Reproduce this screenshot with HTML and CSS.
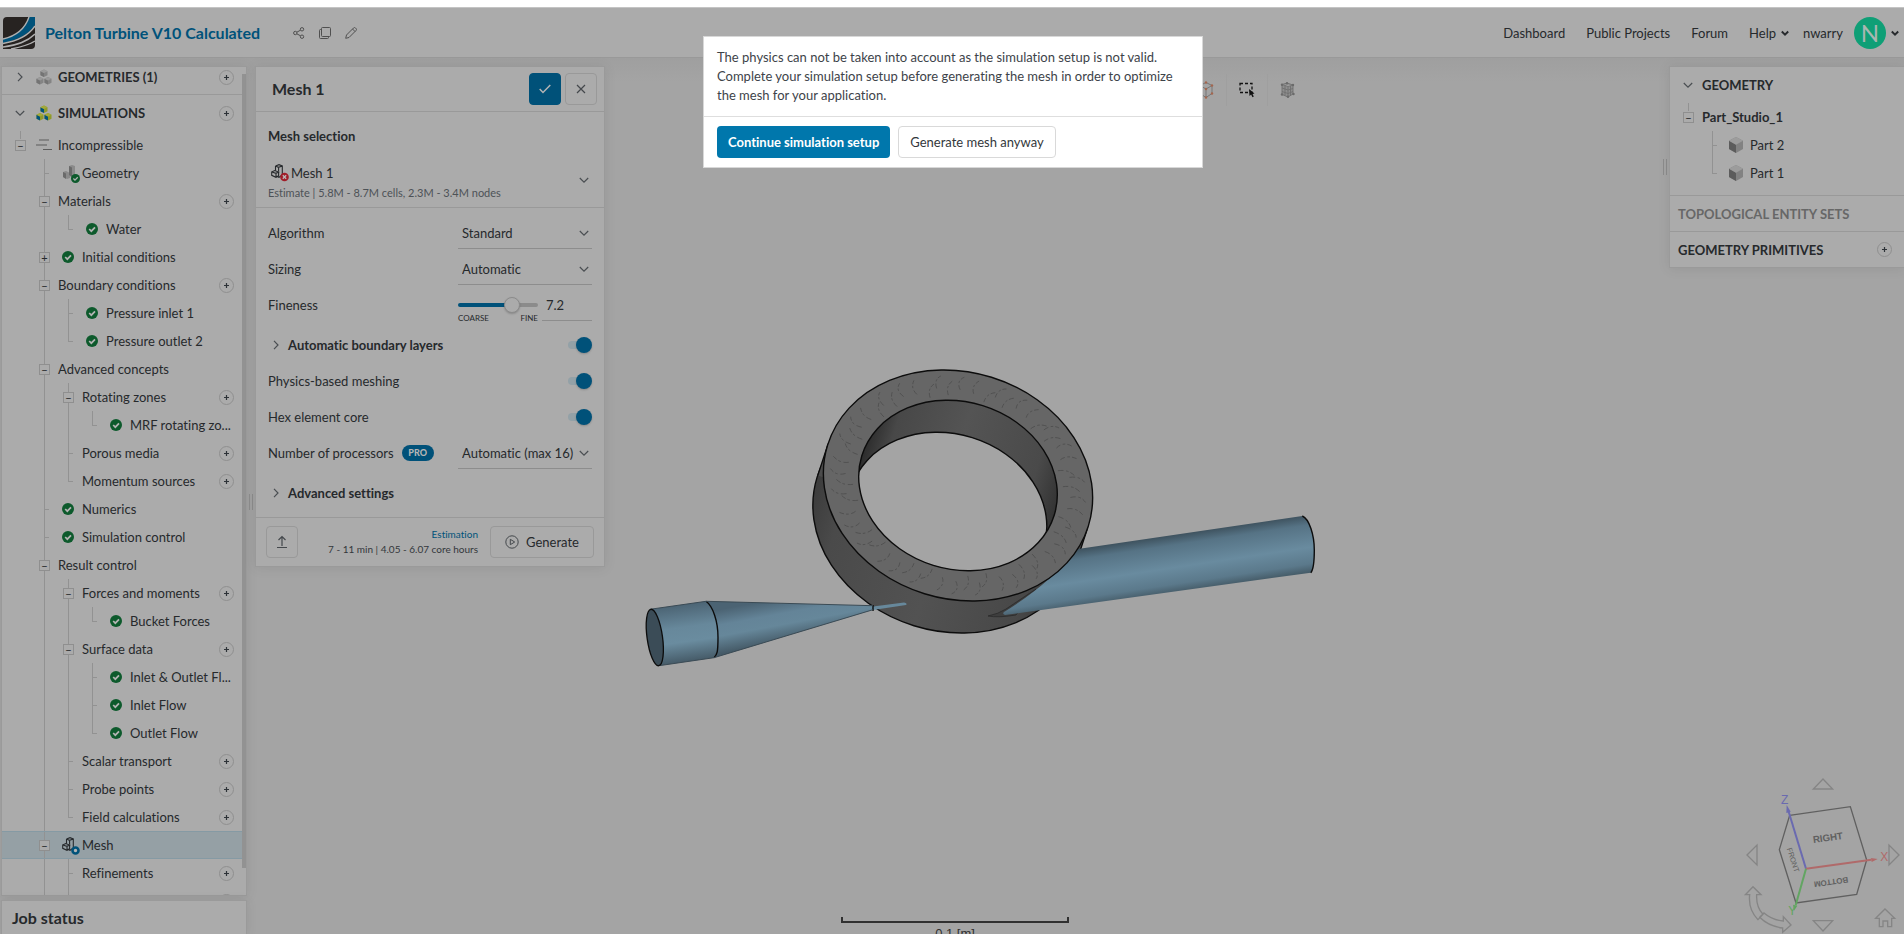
FILE: index.html
```html
<!DOCTYPE html>
<html lang="en">
<head>
<meta charset="utf-8">
<title>Pelton Turbine V10 Calculated</title>
<link rel="stylesheet" href="styles.css">
</head>
<body>
<svg class="defs" aria-hidden="true">
  <symbol id="plus" viewBox="0 0 15 15"><circle cx="7.5" cy="7.5" r="7" fill="none" stroke="#8f8f8f"/><path d="M5 7.5h5M7.5 5v5" stroke="#2e3338" stroke-width="1.2"/></symbol>
  <symbol id="down" viewBox="0 0 10 10"><path d="M.8 3l4.200 4.200L9.200 3" fill="none" stroke="#4a4e52" stroke-width="1.200"/></symbol>
  <symbol id="right" viewBox="0 0 10 10"><path d="M3 .8l4 4.200-4 4.200" fill="none" stroke="#4a4e52" stroke-width="1.200"/></symbol>
  <symbol id="caret" viewBox="0 0 10 10"><path d="M1.800 3.500L5 6.700l3.200-3.200" fill="none" stroke="#26292c" stroke-width="1.900"/></symbol>
  <symbol id="ok" viewBox="0 0 12 12"><circle cx="6" cy="6" r="6" fill="#0d5a2c"/><path d="M3.200 6l2.100 2.200 3.700-3.900" fill="none" stroke="#b4b4b4" stroke-width="1.700"/></symbol>
  <symbol id="cubes" viewBox="0 0 16 16">
    <path class="c1" d="M8 .5l3.500 1.700v4L8 8 4.500 6.200v-4zM4 8l3.500 1.700v4L4 15.500.5 13.700v-4zM12 8l3.500 1.700v4L12 15.500l-3.500-1.800v-4z"/>
    <path class="c2" d="M4.500 2.200L8 4v4L4.500 6.200zM.5 9.700L4 11.500v4L.5 13.700zM8.500 9.700l3.500 1.800v4l-3.500-1.800z"/>
    <path class="c3" d="M8 .5l3.500 1.700L8 4 4.500 2.200zM4 8l3.500 1.700L4 11.500.5 9.700zM12 8l3.500 1.700-3.500 1.800-3.500-1.800z"/>
  </symbol>
  <symbol id="meshcube" viewBox="0 0 12 14">
    <path d="M4.500 2L8 .7l3.300 1.200V11L8 13.300 5 12M4.500 2v4.200M4.500 2l3 1.300 3.800-1.400M7.600 3.300v4M.7 8l3-1.500L7.600 8 5 9.300zM.7 8v3.300L5 13.300l2.600-1.600V8M5 9.300v4" fill="none" stroke="#26292c" stroke-width="1.100"/>
  </symbol>
  <symbol id="part" viewBox="0 0 14 16">
    <path d="M7 0l7 3.700v8.300l-7 4-7-4V3.700z" fill="#828282"/><path d="M0 3.700l7 4V16l-7-4z" fill="#5c5c5c"/><path d="M7 0l7 3.700-7 4-7-4z" fill="#9c9c9c"/>
  </symbol>
</svg>

<header class="topbar">
  <svg class="logo" viewBox="0 0 32 32" role="img" aria-label="Home">
    <path d="M0 4a4 4 0 0 1 4-4h28v28a4 4 0 0 1-4 4H0z" fill="#272321"/>
    <path d="M26 0h6v8C26 17 15 23 0 26v-4C13 19 22 12 26 0z" fill="#00527a"/>
    <path d="M26 0C22 12 13 19 0 22M32 9C26 18 15 24 0 26.500M32 17C24 25 14 28 0 30M32 24C26 28 18 30 8 32" fill="none" stroke="#b0b0b0" stroke-width="1.400"/>
  </svg>
  <h1 class="project">Pelton Turbine V10 Calculated</h1>
  <div class="tools">
    <button class="bare" aria-label="Share"><svg width="12" height="12" viewBox="0 0 12 12" fill="none" stroke="#505050"><circle cx="9" cy="2.300" r="1.700"/><circle cx="2.300" cy="6" r="1.700"/><circle cx="9" cy="9.700" r="1.700"/><path d="M3.800 5.200l3.700-2M3.800 6.800l3.700 2"/></svg></button>
    <button class="bare" aria-label="Duplicate"><svg width="12" height="12" viewBox="0 0 12 12" fill="none" stroke="#505050"><rect x="2.500" y=".5" width="9" height="9" rx="1"/><path d="M2.500 2.500h-1a1 1 0 0 0-1 1v7a1 1 0 0 0 1 1h7a1 1 0 0 0 1-1v-1"/></svg></button>
    <button class="bare" aria-label="Rename"><svg width="12" height="12" viewBox="0 0 12 12" fill="none" stroke="#505050"><path d="M.7 11.300l.8-3.300L8.500 1a1.400 1.400 0 0 1 2 0l.5.500a1.400 1.400 0 0 1 0 2L4 10.500zM7.500 2l2.500 2.500"/></svg></button>
  </div>
  <nav class="nav">
    <a href="#">Dashboard</a>
    <a href="#">Public Projects</a>
    <a href="#">Forum</a>
    <a href="#" class="menu">Help <svg class="s10"><use href="#caret"/></svg></a>
  </nav>
  <button class="user"><span>nwarry</span><span class="avatar">N</span><svg class="s10"><use href="#caret"/></svg></button>
</header>

<main class="work">
  <div class="stage">
    <svg class="model" width="736" height="348" viewBox="584 322 736 348" role="img" aria-label="Turbine geometry">
      <defs>
        <linearGradient id="side" x1="0" x2="1"><stop offset="0" stop-color="#3c3c3c"/><stop offset=".12" stop-color="#4a4a4a"/><stop offset=".5" stop-color="#525252"/><stop offset=".85" stop-color="#484848"/><stop offset="1" stop-color="#333"/></linearGradient>
        <linearGradient id="hole" x1="0" x2="1"><stop offset="0" stop-color="#2c2c2c"/><stop offset=".12" stop-color="#484848"/><stop offset=".45" stop-color="#545454"/><stop offset=".85" stop-color="#4a4a4a"/><stop offset="1" stop-color="#333"/></linearGradient>
        <linearGradient id="pipe" gradientUnits="userSpaceOnUse" x1="1180" y1="533" x2="1189" y2="593"><stop offset="0" stop-color="#3c4f5b"/><stop offset=".18" stop-color="#567385"/><stop offset=".55" stop-color="#698b9f"/><stop offset=".82" stop-color="#5b798b"/><stop offset="1" stop-color="#40545f"/></linearGradient>
        <linearGradient id="inlet" gradientUnits="userSpaceOnUse" x1="680" y1="604" x2="688" y2="662"><stop offset="0" stop-color="#4b6373"/><stop offset=".4" stop-color="#67889b"/><stop offset=".65" stop-color="#6a8c9f"/><stop offset="1" stop-color="#455a67"/></linearGradient>
        <linearGradient id="cone" gradientUnits="userSpaceOnUse" x1="760" y1="602" x2="768" y2="645"><stop offset="0" stop-color="#4b6373"/><stop offset=".35" stop-color="#648498"/><stop offset=".6" stop-color="#66879a"/><stop offset="1" stop-color="#455a67"/></linearGradient>
        <clipPath id="bore"><ellipse cx="958" cy="485.500" rx="100.700" ry="83.600" transform="rotate(17.200 958 485.500)"/></clipPath>
        <g id="marks" fill="none" stroke="#4a4a4a" stroke-width=".55" stroke-dasharray="4 2 2 1.500">
          <path d="M77 0q8 0 11 6"/><path d="M84 7q8 0 10 6"/><path d="M77 14q9 0 12 8"/><path d="M80 24q8-1 10 6"/><path d="M75 33q7 0 10 7"/>
        </g>
      </defs>
      <g stroke="#0c0c0c" stroke-width="1.400">
        <ellipse cx="947.500" cy="517.500" rx="136.500" ry="113.300" transform="rotate(17.200 947.500 517.500)" fill="url(#side)"/>
        <path d="M828.200 443.600L817.700 475.600 1077.300 559.400 1087.800 527.400z" fill="#4c4c4c" stroke="none"/>
        <path d="M828.200 443.600L817.700 475.600M1077.300 559.400L1087.800 527.400" fill="none"/>
      </g>
      <path d="M988 616q10-2 18-7l30-20-20 26q-18 3-28 1z" fill="#3e3e3e" stroke="#222" stroke-width=".6"/>
      <path d="M1078 549L1302.300 516c8 4 12 19 12 34s-1 20-3.500 22.700L1005 615q-3-1-1-3 26-16 46-34l15-30z" fill="url(#pipe)"/>
      <path d="M1302.300 516c7 3 12 19 12 34s-1 20-3.500 22.700" fill="none" stroke="#0c0c0c" stroke-width="1.400"/>
      <ellipse cx="958" cy="485.500" rx="136.500" ry="113.300" transform="rotate(17.200 958 485.500)" fill="#666" stroke="#0c0c0c" stroke-width="1.400"/>
      <g transform="translate(958 485.500) rotate(17.200) scale(1.365 1.133)">
        <use href="#marks"/><use href="#marks" transform="rotate(30)"/><use href="#marks" transform="rotate(60)"/><use href="#marks" transform="rotate(90)"/><use href="#marks" transform="rotate(120)"/><use href="#marks" transform="rotate(150)"/><use href="#marks" transform="rotate(180)"/><use href="#marks" transform="rotate(210)"/><use href="#marks" transform="rotate(240)"/><use href="#marks" transform="rotate(270)"/><use href="#marks" transform="rotate(300)"/><use href="#marks" transform="rotate(330)"/>
      </g>
      <ellipse cx="958" cy="485.500" rx="100.700" ry="83.600" transform="rotate(17.200 958 485.500)" fill="url(#hole)"/>
      <g clip-path="url(#bore)"><ellipse cx="947.500" cy="517.500" rx="100.700" ry="83.600" transform="rotate(17.200 947.500 517.500)" fill="#a4a4a4" stroke="#0c0c0c" stroke-width="1.400"/></g>
      <ellipse cx="958" cy="485.500" rx="100.700" ry="83.600" transform="rotate(17.200 958 485.500)" fill="none" stroke="#0c0c0c" stroke-width="1.400"/>
      <path d="M873 606.500l31-4q4 1 2 2.500l-33 5z" fill="#67889b"/>
      <path d="M706 601.300L873.300 605.700v4L714 657.700z" fill="url(#cone)"/>
      <path d="M650 609.300L706 601.300c7 5 12 20 12 36s-1 17-4 20.400L659 665.700z" fill="url(#inlet)"/>
      <path d="M706 601.300c7 5 12 20 12 36s-1 17-4 20.400M873 605v6" fill="none" stroke="#0c0c0c" stroke-width="1.400"/>
      <path d="M650 609.300l56-8 167 4.400M659 665.700l55-8 159-48" fill="none" stroke="#3b4b55"/>
      <ellipse cx="654.800" cy="637.500" rx="7.700" ry="28.500" transform="rotate(-8 654.800 637.500)" fill="#3b4c57" stroke="#0c0c0c" stroke-width="1.300"/>
    </svg>
    <div class="scale"><div class="ruler"></div><span>0.1 [m]</span></div>
    <div class="viewbar">
      <button class="bare" aria-label="Solid view"><svg width="16" height="18" viewBox="0 0 16 18" fill="none"><path d="M8 1.500l6 3v8l-6 4-6-4v-8zM2 4.500L8 8l6-3.500M8 8v8" stroke="#777"/><g fill="#a3664f"><circle cx="8" cy="1.500" r="1.200"/><circle cx="14" cy="4.500" r="1.200"/><circle cx="14" cy="12.500" r="1.200"/><circle cx="8" cy="16.500" r="1.200"/><circle cx="8" cy="8" r="1.200"/></g></svg></button>
      <span class="bar"></span>
      <button class="bare" aria-label="Box select"><svg width="16" height="16" viewBox="0 0 16 16"><rect x="1" y="1.500" width="12" height="9" fill="none" stroke="#111" stroke-width="1.300" stroke-dasharray="3 2"/><path d="M10 7l5.500 4.500-2 .4 1.300 2.600-1.300.8-1.400-2.700-1.600 1.400z" fill="#111"/></svg></button>
      <span class="bar"></span>
      <button class="bare" aria-label="Mesh view"><svg width="16" height="16" viewBox="0 0 16 16"><path d="M2 2.500L8 4.500V15L2 12.500zM5 3.500v10M2 6l6 2M2 9.500l6 2M8 4.500L13 3v9l-5 3M2 2.500L7 1l6 2M10.500 4v9.500M8 8l5-1.500M8 11.500l5-2" fill="#8e8e8e" stroke="#707070" stroke-width=".9"/><g fill="#6a6a6a"><circle cx="7" cy="1.300" r="1.200"/><circle cx="2" cy="2.700" r="1.200"/><circle cx="13" cy="3" r="1.200"/><circle cx="2" cy="12.500" r="1.200"/><circle cx="13.500" cy="12" r="1.200"/><circle cx="8" cy="14.700" r="1.200"/></g></svg></button>
    </div>
    <svg class="viewcube" width="184" height="174" viewBox="0 0 552 522" fill="none" stroke-width="3" role="img" aria-label="Orientation cube">
      <g stroke="#858585" stroke-width="4"><path d="M309 57l29 30h-58zM309 513l29-31h-58zM81 285l30-30v60zM537 285l-30-30v60z"/>
      <path d="M76 404l23-24 24 24h-13q-2 38 19 59l-15 16q-30-30-25-75zM119 472l13-13q24 21 58 24v-13l23 25-25 22v-13q-42-5-69-32z"/>
      <path d="M467 475l28-28 29 28h-9v25h-12v-17h-14v17h-11v-25z"/></g>
      <path d="M209 166l182-26 49 160-30 103-182 26-50-160z" stroke="#606060" stroke-width="4"/>
      <g stroke-width="6"><path d="M258 326L206 155" stroke="#6a6ab0"/><path d="M258 326l196-27" stroke="#b06a6a"/><path d="M258 326l-31 110" stroke="#62a562"/></g>
      <path d="M200 135l12 20-13 4z" fill="#6a6ab0"/><path d="M473 297l-18 9-2-12z" fill="#b06a6a"/><path d="M222 452l-3-18 13 3z" fill="#62a562"/>
      <g class="axis" text-anchor="middle"><text x="194" y="132" fill="#6a6ab0">Z</text><text x="493" y="303" fill="#b06a6a">X</text><text x="217" y="466" fill="#62a562">Y</text></g>
      <g class="face" fill="#606060" text-anchor="middle"><text transform="translate(325 243) rotate(-8)">RIGHT</text><text class="sm" transform="translate(332 358) rotate(172)">BOTTOM</text><text class="xs" transform="translate(212 302) rotate(72)">FRONT</text></g>
    </svg>
  </div>

  <aside class="left">
    <section class="panel tree" aria-label="Project tree">
      <div class="row head first"><span class="c"><svg class="s10"><use href="#right"/></svg></span><span class="c"><svg class="s16 grey"><use href="#cubes"/></svg></span><b>GEOMETRIES (1)</b><button class="add" aria-label="Add"><svg><use href="#plus"/></svg></button></div>
      <div class="row head"><span class="c"><svg class="s10"><use href="#down"/></svg></span><span class="c"><svg class="s16 color"><use href="#cubes"/></svg></span><b>SIMULATIONS</b><button class="add" aria-label="Add"><svg><use href="#plus"/></svg></button></div>
      <div class="row"><span class="c up"><button class="ex">−</button></span><span class="c"><svg class="s16" viewBox="0 0 16 16"><path d="M3 3h10M0 8h11M7 12.500h9" stroke="#5c5c5c" stroke-width="1.200"/></svg></span><span class="t">Incompressible</span></div>
      <div class="row"><span class="c"></span><span class="c v k"></span><span class="c badge"><svg class="s18" viewBox="0 0 18 18"><path d="M7 1l3-1 3 1v9l-3 2-3-1zM1 7l3-1 4 2v5l-3 1-4-2z" fill="#8a8a8a"/><path d="M7 1l3 1.500V12l-3-2zM1 7l3 1.500V14l-3-2z" fill="#6a6a6a"/><use href="#ok" x="9" y="9" width="9" height="9"/></svg></span><span class="t">Geometry</span></div>
      <div class="row"><span class="c"></span><span class="c v"><button class="ex">−</button></span><span class="t">Materials</span><button class="add" aria-label="Add"><svg><use href="#plus"/></svg></button></div>
      <div class="row"><span class="c"></span><span class="c v"></span><span class="c h k"></span><span class="c"><svg class="s12"><use href="#ok"/></svg></span><span class="t">Water</span></div>
      <div class="row"><span class="c"></span><span class="c v"><button class="ex">+</button></span><span class="c"><svg class="s12"><use href="#ok"/></svg></span><span class="t">Initial conditions</span></div>
      <div class="row"><span class="c"></span><span class="c v"><button class="ex">−</button></span><span class="t">Boundary conditions</span><button class="add" aria-label="Add"><svg><use href="#plus"/></svg></button></div>
      <div class="row"><span class="c"></span><span class="c v"></span><span class="c v k"></span><span class="c"><svg class="s12"><use href="#ok"/></svg></span><span class="t">Pressure inlet 1</span></div>
      <div class="row"><span class="c"></span><span class="c v"></span><span class="c h k"></span><span class="c"><svg class="s12"><use href="#ok"/></svg></span><span class="t">Pressure outlet 2</span></div>
      <div class="row"><span class="c"></span><span class="c v"><button class="ex">−</button></span><span class="t">Advanced concepts</span></div>
      <div class="row"><span class="c"></span><span class="c v"></span><span class="c v"><button class="ex">−</button></span><span class="t">Rotating zones</span><button class="add" aria-label="Add"><svg><use href="#plus"/></svg></button></div>
      <div class="row"><span class="c"></span><span class="c v"></span><span class="c v"></span><span class="c h k"></span><span class="c"><svg class="s12"><use href="#ok"/></svg></span><span class="t">MRF rotating zo...</span></div>
      <div class="row"><span class="c"></span><span class="c v"></span><span class="c v k"></span><span class="t">Porous media</span><button class="add" aria-label="Add"><svg><use href="#plus"/></svg></button></div>
      <div class="row"><span class="c"></span><span class="c v"></span><span class="c h k"></span><span class="t">Momentum sources</span><button class="add" aria-label="Add"><svg><use href="#plus"/></svg></button></div>
      <div class="row"><span class="c"></span><span class="c v k"></span><span class="c"><svg class="s12"><use href="#ok"/></svg></span><span class="t">Numerics</span></div>
      <div class="row"><span class="c"></span><span class="c v k"></span><span class="c"><svg class="s12"><use href="#ok"/></svg></span><span class="t">Simulation control</span></div>
      <div class="row"><span class="c"></span><span class="c v"><button class="ex">−</button></span><span class="t">Result control</span></div>
      <div class="row"><span class="c"></span><span class="c v"></span><span class="c v"><button class="ex">−</button></span><span class="t">Forces and moments</span><button class="add" aria-label="Add"><svg><use href="#plus"/></svg></button></div>
      <div class="row"><span class="c"></span><span class="c v"></span><span class="c v"></span><span class="c h k"></span><span class="c"><svg class="s12"><use href="#ok"/></svg></span><span class="t">Bucket Forces</span></div>
      <div class="row"><span class="c"></span><span class="c v"></span><span class="c v"><button class="ex">−</button></span><span class="t">Surface data</span><button class="add" aria-label="Add"><svg><use href="#plus"/></svg></button></div>
      <div class="row"><span class="c"></span><span class="c v"></span><span class="c v"></span><span class="c v k"></span><span class="c"><svg class="s12"><use href="#ok"/></svg></span><span class="t">Inlet &amp; Outlet Fl...</span></div>
      <div class="row"><span class="c"></span><span class="c v"></span><span class="c v"></span><span class="c v k"></span><span class="c"><svg class="s12"><use href="#ok"/></svg></span><span class="t">Inlet Flow</span></div>
      <div class="row"><span class="c"></span><span class="c v"></span><span class="c v"></span><span class="c h k"></span><span class="c"><svg class="s12"><use href="#ok"/></svg></span><span class="t">Outlet Flow</span></div>
      <div class="row"><span class="c"></span><span class="c v"></span><span class="c v k"></span><span class="t">Scalar transport</span><button class="add" aria-label="Add"><svg><use href="#plus"/></svg></button></div>
      <div class="row"><span class="c"></span><span class="c v"></span><span class="c v k"></span><span class="t">Probe points</span><button class="add" aria-label="Add"><svg><use href="#plus"/></svg></button></div>
      <div class="row"><span class="c"></span><span class="c v"></span><span class="c h k"></span><span class="t">Field calculations</span><button class="add" aria-label="Add"><svg><use href="#plus"/></svg></button></div>
      <div class="row active"><span class="c"></span><span class="c v"><button class="ex">−</button></span><span class="c badge"><svg class="s18" viewBox="0 0 18 18"><use href="#meshcube" width="12" height="14"/><circle cx="13.500" cy="13.500" r="3" fill="#b4b4b4" stroke="#00527a" stroke-width="2.600"/></svg></span><span class="t">Mesh</span></div>
      <div class="row"><span class="c"></span><span class="c v"></span><span class="c v k"></span><span class="t">Refinements</span><button class="add" aria-label="Add"><svg><use href="#plus"/></svg></button></div>
      <div class="row"><span class="c"></span><span class="c v"></span><span class="c v"></span><button class="add" aria-label="Add"><svg><use href="#plus"/></svg></button></div>
      <div class="thumb"></div>
    </section>
    <section class="panel job"><h2>Job status</h2></section>
  </aside>
  <div class="grip low"></div>

  <section class="panel mesh">
    <header class="mhead"><h2>Mesh 1</h2>
      <button class="btn sq primary" aria-label="Apply"><svg width="12" height="10" viewBox="0 0 12 10"><path d="M.7 5l3.300 3.500L11.300 1" fill="none" stroke="#b4b4b4" stroke-width="1.500"/></svg></button>
      <button class="btn sq" aria-label="Close"><svg width="10" height="10" viewBox="0 0 10 10"><path d="M1 1l8 8M9 1L1 9" stroke="#44484c" stroke-width="1.200"/></svg></button>
    </header>
    <h3 class="sel-title">Mesh selection</h3>
    <button class="pick">
      <span class="pick-text"><span class="pick-name"><svg class="s18" viewBox="0 0 18 18"><use href="#meshcube" width="12" height="14"/><circle cx="13.500" cy="13" r="4.300" fill="#a11d28"/><path d="M11.800 11.300l3.400 3.400M15.200 11.300l-3.400 3.400" stroke="#bbb" stroke-width="1.300"/></svg>Mesh 1</span><span class="est">Estimate | 5.8M - 8.7M cells, 2.3M - 3.4M nodes</span></span>
      <svg class="s10"><use href="#down"/></svg>
    </button>
    <div class="form">
      <div class="field"><label for="alg">Algorithm</label><span class="drop"><select id="alg"><option>Standard</option></select><svg class="s10"><use href="#down"/></svg></span></div>
      <div class="field"><label for="siz">Sizing</label><span class="drop"><select id="siz"><option>Automatic</option></select><svg class="s10"><use href="#down"/></svg></span></div>
      <div class="field"><label for="fin">Fineness</label>
        <span class="fine"><span class="range"><input id="fin" type="range" min="0" max="10" step="0.1" value="7.2"><span class="ends"><span>COARSE</span><span>FINE</span></span></span><input class="num" type="text" value="7.2" aria-label="Fineness value"></span></div>
      <div class="field fold"><svg class="s10"><use href="#right"/></svg><label for="abl">Automatic boundary layers</label><input id="abl" class="toggle" type="checkbox" checked></div>
      <div class="field"><label for="phy">Physics-based meshing</label><input id="phy" class="toggle" type="checkbox" checked></div>
      <div class="field"><label for="hex">Hex element core</label><input id="hex" class="toggle" type="checkbox" checked></div>
      <div class="field"><label for="cpu">Number of processors</label><span class="pro">PRO</span><span class="drop"><select id="cpu"><option>Automatic (max 16)</option></select><svg class="s10"><use href="#down"/></svg></span></div>
      <div class="field fold"><svg class="s10"><use href="#right"/></svg><b>Advanced settings</b></div>
    </div>
    <footer class="mfoot">
      <button class="btn sq" aria-label="Upload"><svg width="12" height="14" viewBox="0 0 12 14"><path d="M1 12.500h10M6 11V2M2.500 5L6 1.500 9.500 5" fill="none" stroke="#44484c" stroke-width="1.200"/></svg></button>
      <p class="esti"><a href="#">Estimation</a><span>7 - 11 min | 4.05 - 6.07 core hours</span></p>
      <button class="btn gen"><svg width="14" height="14" viewBox="0 0 14 14" fill="none" stroke="#44484c"><circle cx="7" cy="7" r="6.200"/><path d="M5.300 4.300v5.400L9.700 7z"/></svg>Generate</button>
    </footer>
  </section>

  <div class="grip high"></div>
  <aside class="panel right">
    <div class="row head"><span class="c"><svg class="s10"><use href="#down"/></svg></span><b>GEOMETRY</b></div>
    <div class="row"><span class="c up"><button class="ex">−</button></span><b>Part_Studio_1</b></div>
    <div class="row"><span class="c"></span><span class="c v k"></span><span class="c"><svg class="cube"><use href="#part"/></svg></span><span class="t">Part 2</span></div>
    <div class="row"><span class="c"></span><span class="c h k"></span><span class="c"><svg class="cube"><use href="#part"/></svg></span><span class="t">Part 1</span></div>
    <div class="row sect muted"><b>TOPOLOGICAL ENTITY SETS</b></div>
    <div class="row sect"><b>GEOMETRY PRIMITIVES</b><button class="add" aria-label="Add"><svg><use href="#plus"/></svg></button></div>
  </aside>
</main>

<div class="overlay">
  <div class="dialog" role="dialog" aria-label="Simulation setup">
    <p>The physics can not be taken into account as the simulation setup is not valid. Complete your simulation setup before generating the mesh in order to optimize the mesh for your application.</p>
    <div class="actions"><button class="go">Continue simulation setup</button><button class="alt">Generate mesh anyway</button></div>
  </div>
</div>
</body>
</html>
```
FILE: styles.css
```css
* { box-sizing: border-box; }
body {
  margin: 0; height: 100vh; overflow: hidden; display: flex; flex-direction: column;
  border-top: 7px solid #fff; background: #a4a4a4;
  font: 13px/20px Lato, "Liberation Sans", sans-serif; color: #26292c;
  font-variant-ligatures: none;
}
button, input, select { font: inherit; font-variant-ligatures: none; color: inherit; margin: 0; padding: 0; }
h1, h2, h3, p { margin: 0; }
a { color: inherit; text-decoration: none; }
b, h2, h3 { font-weight: 700; }
svg { flex: none; display: block; }
.defs { position: absolute; width: 0; height: 0; }
.bare { border: 0; background: none; display: flex; }
.s10 { width: 10px; height: 10px; }
.s12 { width: 12px; height: 12px; }
.s16 { width: 16px; height: 16px; }
.s18 { width: 18px; height: 18px; }
.cube { width: 14px; height: 16px; }

.topbar {
  flex: none; height: 51px; display: flex; align-items: center; padding: 1px 4px 0 3px;
  background: #ababab; border-top: 1px solid #c4c4c4; border-bottom: 1px solid #999;
}
.logo { width: 32px; height: 32px; }
.project { margin-left: 10px; font-size: 16px; font-weight: 700; color: #00527a; }
.tools { display: flex; gap: 14px; margin-left: 33px; }
.nav { margin-left: auto; display: flex; gap: 21px; }
.menu { display: flex; align-items: center; gap: 4px; }
.user { display: flex; align-items: center; border: 0; background: none; margin-left: 13px; gap: 4px; }
.avatar {
  width: 32px; height: 32px; border-radius: 50%; background: #0f9f76; color: #a9b7b2;
  font-size: 24px; line-height: 32px; text-align: center; margin-left: 7px;
}

.work { flex: 1; min-height: 0; position: relative; display: flex; align-items: flex-start; padding: 8px 0 0 1px; }
.panel { position: relative; background: #ababab; border: 1px solid #9a9a9a; box-shadow: 0 1px 12px rgba(0, 0, 0, .08); }

.stage {
  position: absolute; inset: 0; display: flex; align-items: center; justify-content: center;
  background: linear-gradient(#9f9f9f, #a4a4a4 24px);
}
.scale { position: absolute; left: 50%; bottom: -8px; width: 228px; margin-left: -111px; text-align: center; font: 13px/16px "Liberation Sans", sans-serif; color: #303030; }
.ruler { height: 6px; border: 2px solid #303030; border-top: 0; margin-bottom: 3px; }
.scale span { display: block; }
.viewbar { position: absolute; top: 16px; left: 50%; height: 32px; margin-left: 246px; display: flex; align-items: center; gap: 12px; }
.bar { width: 1px; height: 32px; background: #9f9f9f; }
.viewcube { position: absolute; right: 0; bottom: 0; font-family: "Liberation Sans", sans-serif; }
.axis { font-size: 36px; }
.face { font-size: 29px; font-weight: 700; }
.face .sm { font-size: 24px; }
.face .xs { font-size: 22px; font-weight: 400; }

.left { position: relative; width: 246px; height: 100%; display: flex; flex-direction: column; gap: 4px; }
.tree { flex: 1; min-height: 0; overflow: hidden; padding-right: 4px; }
.thumb { position: absolute; top: 7px; right: 0; bottom: 27px; width: 4px; background: #929292; }
.job { height: 34px; flex: none; border-bottom: 0; padding: 6px 10px; }
h2 { font-size: 16px; line-height: 22px; }

.row { height: 28px; display: flex; align-items: center; padding: 0 8px 0 6px; white-space: nowrap; }
.head { height: 36px; }
.first { height: 28px; padding-bottom: 7px; border-bottom: 1px solid #999; }
.row > b, .row > .t { padding-left: 2px; line-height: 20px; }
.add { margin-left: auto; border: 0; background: none; width: 15px; height: 15px; flex: none; }
.add svg { width: 15px; height: 15px; }
.c { width: 24px; align-self: stretch; flex: none; display: flex; align-items: center; justify-content: center; background-repeat: no-repeat; }
.badge { justify-content: flex-end; padding-top: 2px; }
.v { background-image: linear-gradient(#929292, #929292); background-size: 1px 100%; background-position: 12px 0; }
.h { background-image: linear-gradient(#929292, #929292); background-size: 1px 50%; background-position: 12px 0; }
.up { background-image: linear-gradient(#929292, #929292); background-size: 1px 30%; background-position: 12px 0; }
.k::after { content: ""; width: 5px; height: 1px; background: #929292; margin-left: 5px; }
.ex {
  width: 11px; height: 11px; border: 1px solid #8f8f8f; background: #ababab; color: #26292c;
  font-size: 11px; line-height: 9px; display: flex; align-items: center; justify-content: center; margin-left: 1px;
}
.active { background: #95a0a5; border-top: 1px solid #859aa4; border-bottom: 1px solid #859aa4; }
.c1 { fill: var(--a); }
.c2 { fill: var(--b); }
.c3 { fill: var(--d); }
.grey { --a: #848484; --b: #747474; --d: #9a9a9a; }
.color { --a: #8f9a2a; --b: #00527a; --d: #a3a93a; }

.grip { position: relative; flex: none; width: 4px; height: 16px; border: solid #8b8b8b; border-width: 0 1px; }
.low { margin: 428px 2px 0 2px; }
.high { margin: 93px 2px 0 auto; }

.mesh { width: 350px; flex: none; }
.mhead { display: flex; align-items: center; gap: 4px; height: 45px; padding: 0 7px 0 16px; border-bottom: 1px solid #999; }
.mhead h2 { margin-right: auto; }
.btn { height: 32px; border: 1px solid #999; border-radius: 4px; background: none; display: flex; align-items: center; justify-content: center; }
.sq { width: 32px; flex: none; }
.primary { background: #005179; border-color: #005179; }
.sel-title { font-size: 13px; line-height: 20px; padding: 14px 12px 0; }
.pick { width: 100%; height: 62px; border: 0; border-bottom: 1px solid #999; background: none; display: flex; align-items: center; padding: 7px 15px 0 12px; text-align: left; }
.pick-text { margin-right: auto; padding-top: 6px; }
.pick-name { display: flex; align-items: center; gap: 2px; padding-left: 3px; }
.est { display: block; font-size: 11px; line-height: 20px; color: #4d5257; }
.form { padding: 7px 12px 6px; }
.field { display: flex; align-items: center; min-height: 36px; }
.drop { margin-left: auto; width: 134px; display: grid; align-items: center; border-bottom: 1px solid #8d8d8d; }
.drop > * { grid-area: 1 / 1; }
.drop select { appearance: none; border: 0; border-radius: 0; background: none; height: 30px; padding-left: 4px; width: 100%; }
.drop svg { justify-self: end; margin-right: 3px; pointer-events: none; }
.fine { margin-left: auto; width: 134px; display: flex; align-items: center; justify-content: space-between; }
.range { width: 80px; padding-top: 10px; }
.range input { appearance: none; display: block; width: 80px; height: 16px; background: none; }
.range input::-webkit-slider-runnable-track { height: 4px; border-radius: 2px; background: linear-gradient(90deg, #005179 68%, #8b8b8b 68%); }
.range input::-webkit-slider-thumb { appearance: none; width: 16px; height: 16px; margin-top: -6px; border-radius: 50%; background: #ababab; border: 1px solid #8b8b8b; box-shadow: 0 1px 2px rgba(0, 0, 0, .2); }
.ends { display: flex; justify-content: space-between; font-size: 8px; line-height: 10px; }
.num { width: 50px; height: 32px; border: 0; border-bottom: 1px solid #8d8d8d; background: none; padding-left: 4px; }
.fold { font-weight: 700; min-height: 40px; padding: 4px 0 0 3px; gap: 7px; }
.toggle {
  appearance: none; margin-left: auto; width: 24px; height: 16px; flex: none;
  display: flex; align-items: center;
}
.toggle::before { content: ""; width: 12px; height: 8px; border-radius: 4px 0 0 4px; background: #93a1a7; flex: none; }
.toggle::after { content: ""; width: 16px; height: 16px; border-radius: 50%; background: #005179; margin-left: -4px; flex: none; box-shadow: 0 1px 2px rgba(0, 0, 0, .2); }
.pro { margin-left: 8px; width: 32px; height: 16px; border-radius: 8px; background: #005179; color: #b4b4b4; font-size: 9px; font-weight: 900; line-height: 16px; text-align: center; }
.mfoot { display: flex; align-items: center; height: 49px; border-top: 1px solid #999; padding: 0 10px; }
.esti { margin: 0 12px 0 auto; text-align: right; font-size: 10px; line-height: 15px; color: #33373b; }
.esti a { display: block; color: #00527a; }
.gen { width: 104px; gap: 7px; }

.right { width: 235px; flex: none; border-right: 0; }
.right .sect { height: 36px; border-top: 1px solid #999; }
.right .row:nth-child(4) { margin-bottom: 8px; }
.right .row { padding-right: 12px; }
.muted { color: #676767; }

.overlay { position: fixed; inset: 36px 0 auto; display: flex; justify-content: center; padding-left: 2px; }
.dialog { width: 500px; background: #fff; border: 1px solid #d8d8d8; color: #3d4349; }
.dialog p { padding: 11px 13px; line-height: 19px; }
.actions { display: flex; gap: 8px; padding: 9px 13px; border-top: 1px solid #dedede; }
.actions button { height: 32px; border-radius: 4px; padding: 0 11px; white-space: nowrap; }
.go { background: #0077ac; border: 0; color: #fff; font-weight: 700; }
.alt { background: #fff; border: 1px solid #d9d9d9; color: #33373b; }
```
